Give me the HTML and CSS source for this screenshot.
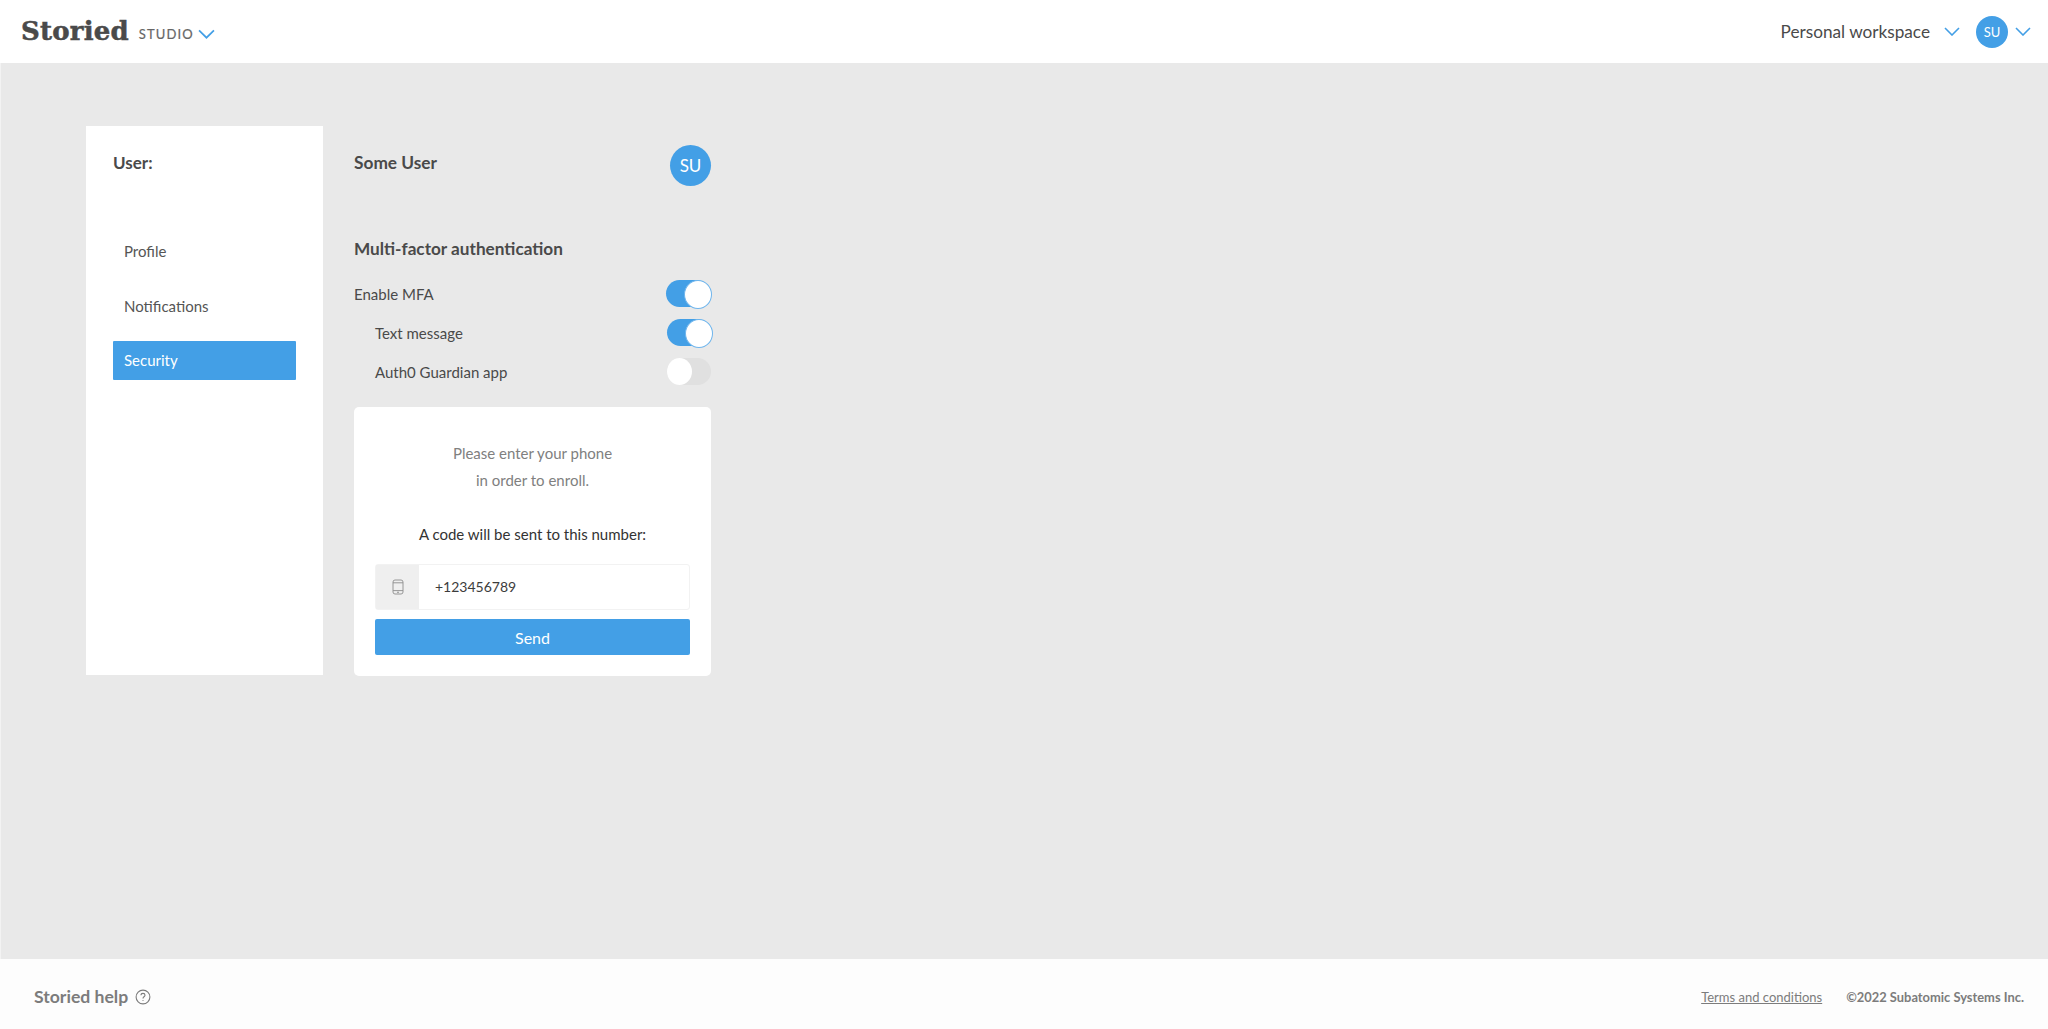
FILE: index.html
```html
<!DOCTYPE html>
<html>
  <head>
    <title>Storied Studio</title>
    <link rel="stylesheet" href="styles.css">
  </head>
  <body>
    <header class="top-bar">
      <div class="brand">
        <span class="brand-name">Storied</span>
        <span class="brand-sub">STUDIO</span>
        <svg class="chevron chevron-brand" viewBox="0 0 16 9"><path d="M1 1l7 7 7-7"/></svg>
      </div>
      <div class="account">
        <span class="workspace">Personal workspace</span>
        <svg class="chevron chevron-workspace" viewBox="0 0 16 9"><path d="M1 1l7 7 7-7"/></svg>
        <span class="avatar avatar-small">SU</span>
        <svg class="chevron chevron-user" viewBox="0 0 16 9"><path d="M1 1l7 7 7-7"/></svg>
      </div>
    </header>

    <main class="content-container">
      <nav class="side-menu">
        <h3 class="side-title">User:</h3>
        <ul class="side-list">
          <li class="side-item">Profile</li>
          <li class="side-item">Notifications</li>
          <li class="side-item side-item-active">Security</li>
        </ul>
      </nav>

      <section class="settings">
        <div class="user-row">
          <h3 class="user-name">Some User</h3>
          <span class="avatar avatar-large">SU</span>
        </div>

        <h3 class="mfa-title">Multi-factor authentication</h3>
        <div class="toggle-row">
          <span>Enable MFA</span>
          <span class="toggle toggle-on"></span>
        </div>
        <div class="toggle-row toggle-row-sub">
          <span>Text message</span>
          <span class="toggle toggle-on"></span>
        </div>
        <div class="toggle-row toggle-row-sub">
          <span>Auth0 Guardian app</span>
          <span class="toggle"></span>
        </div>

        <div class="enroll-card">
          <p class="enroll-hint">Please enter your phone<br>in order to enroll.</p>
          <p class="enroll-note">A code will be sent to this number:</p>
          <div class="phone-field">
            <span class="phone-addon">
              <svg class="phone-icon" viewBox="0 0 12 16">
                <rect x="1" y="1" width="10" height="14" rx="2"/>
                <path d="M1 3.8h10M1 11.6h10"/>
                <circle cx="6" cy="13.3" r="0.5"/>
              </svg>
            </span>
            <span class="phone-value">+123456789</span>
          </div>
          <button class="send-button">Send</button>
        </div>
      </section>
    </main>

    <footer class="bottom-bar">
      <div class="help">
        <span>Storied help</span>
        <svg class="help-icon" viewBox="0 0 16 16">
          <circle cx="8" cy="8" r="6.9"/>
          <path d="M6 6.3c0-1.2.9-1.9 2-1.9s2 .7 2 1.8c0 1.6-2 1.6-2 3.2"/>
          <circle class="help-dot" cx="8" cy="11.5" r="0.6"/>
        </svg>
      </div>
      <div class="legal">
        <a class="terms">Terms and conditions</a>
        <span class="copyright">©2022 Subatomic Systems Inc.</span>
      </div>
    </footer>
  </body>
</html>
```

FILE: styles.css
```css
* {
  box-sizing: border-box;
}

html,
body {
  height: 100%;
}

body {
  margin: 0;
  display: flex;
  flex-direction: column;
  font-family: Lato, "Open Sans", sans-serif;
  font-size: 15px;
  color: #4a4a4a;
  background-color: #e9e9e9;
  overflow: hidden;
}

h3,
p,
ul {
  margin: 0;
  padding: 0;
}

.chevron {
  display: block;
  fill: none;
  stroke: #439fe6;
  stroke-width: 1.6;
}

/* header */
.top-bar {
  height: 63px;
  flex: none;
  background: white;
  display: flex;
  justify-content: space-between;
  align-items: center;
  padding: 0 17px 0 21px;
}

.brand {
  display: flex;
  align-items: center;
}

.brand-name {
  font-family: "DejaVu Serif", serif;
  font-weight: 700;
  font-size: 26px;
  letter-spacing: 0.2px;
  color: #4a4a4a;
  -webkit-text-stroke: 0.5px #4a4a4a;
  margin: -2px 10px 0 0;
}

.brand-sub {
  font-size: 13px;
  letter-spacing: 1.1px;
  color: #666666;
  margin-top: 4px;
  -webkit-text-stroke: 0.2px #666666;
}

.chevron-brand {
  width: 17px;
  height: 10px;
  margin: 5px 0 0 4px;
}

.account {
  display: flex;
  align-items: center;
}

.workspace {
  font-size: 17.2px;
  color: #4a4a4a;
}

.chevron-workspace {
  width: 16px;
  height: 9px;
  margin: 0 16px 0 14px;
}

.avatar {
  display: flex;
  align-items: center;
  justify-content: center;
  border-radius: 50%;
  background: #439fe6;
  color: white;
  flex: none;
}

.avatar-small {
  width: 32px;
  height: 32px;
  font-size: 13px;
}

.avatar-large {
  width: 41px;
  height: 41px;
  font-size: 17px;
}

.chevron-user {
  width: 16px;
  height: 9px;
  margin-left: 7px;
}

/* main area */
.content-container {
  flex: 1;
  display: flex;
  align-items: flex-start;
  padding: 63px 0 0 85px;
  border-left: 1px solid #f3f3f3;
}

.side-menu {
  width: 237px;
  height: 549px;
  background: white;
  padding: 25px 27px 0;
}

.side-title {
  font-size: 17px;
  font-weight: 700;
  line-height: 24px;
  color: #4a4a4a;
  margin-bottom: 57px;
}

.side-list {
  list-style-type: none;
}

.side-item {
  height: 39px;
  line-height: 39px;
  padding-left: 11px;
  margin-bottom: 15.5px;
  border-radius: 1px;
  color: #555555;
}

.side-item-active {
  background: #439fe6;
  color: white;
}

.settings {
  width: 357px;
  margin-left: 31px;
}

.user-row {
  display: flex;
  justify-content: space-between;
  align-items: flex-start;
  padding-top: 19px;
  height: 105px;
}

.user-name {
  font-size: 17.3px;
  font-weight: 700;
  line-height: 24px;
  margin-top: 6px;
}

.mfa-title {
  font-size: 17.2px;
  font-weight: 700;
  line-height: 24px;
  margin-bottom: 19px;
  margin-top: 6px;
}

.toggle-row {
  display: flex;
  justify-content: space-between;
  align-items: center;
  height: 27px;
  margin-bottom: 12px;
  padding-right: 1px;
}

.toggle-row-sub {
  padding-left: 21px;
  padding-right: 0;
}

.toggle {
  position: relative;
  width: 44px;
  height: 27px;
  border-radius: 14px;
  background: #e0e0e0;
}

/* the knob sits over the track */
.toggle::after {
  content: "";
  position: absolute;
  left: 0;
  top: 0;
  width: 25px;
  height: 27px;
  border-radius: 50%;
  background: white;
}

.toggle-on {
  background: #439fe6;
}

.toggle-on::after {
  left: 18px;
  width: 26px;
  border: 1px solid #6fb5ec;
}

.enroll-card {
  background: white;
  border-radius: 5px;
  height: 269px;
  margin-top: 22px;
  padding: 33px 21px 0;
  text-align: center;
}

.enroll-hint {
  line-height: 27px;
  color: #808080;
  margin-bottom: 27px;
}

.enroll-note {
  line-height: 27px;
  color: #333333;
  margin-bottom: 16px;
}

.phone-field {
  display: flex;
  height: 46px;
  border: 1px solid #f2f2f2;
  border-radius: 3px;
  text-align: left;
  margin-bottom: 9px;
}

.phone-addon {
  width: 43px;
  background: #efefef;
  display: flex;
  align-items: center;
  justify-content: center;
}

.phone-icon {
  width: 12px;
  height: 16px;
  fill: none;
  stroke: #8c8c8c;
  stroke-width: 0.9;
}

.phone-value {
  font-size: 14px;
  line-height: 44px;
  padding-left: 16px;
  color: #3c3c3c;
}

.send-button {
  display: block;
  width: 100%;
  height: 36px;
  border: none;
  border-radius: 2px;
  background: #439fe6;
  color: white;
  font-family: Lato, sans-serif;
  font-size: 16px;
}

/* footer */
.bottom-bar {
  height: 70px;
  flex: none;
  background: #fdfdfd;
  display: flex;
  justify-content: space-between;
  align-items: center;
  padding: 5px 24px 0 34px;
}

.help {
  display: flex;
  align-items: center;
  font-size: 17.6px;
  font-weight: 700;
  color: #7c7c7c;
}

.help-icon {
  width: 16px;
  height: 16px;
  margin-left: 7px;
  fill: none;
  stroke: #7c7c7c;
  stroke-width: 1.1;
}

.help-dot {
  fill: #7c7c7c;
  stroke: none;
}

.legal {
  display: flex;
  font-size: 13px;
  color: #7c7c7c;
}

.terms {
  text-decoration: underline;
  margin-right: 24px;
}

.copyright {
  font-size: 12.9px;
  font-weight: 700;
}
```
